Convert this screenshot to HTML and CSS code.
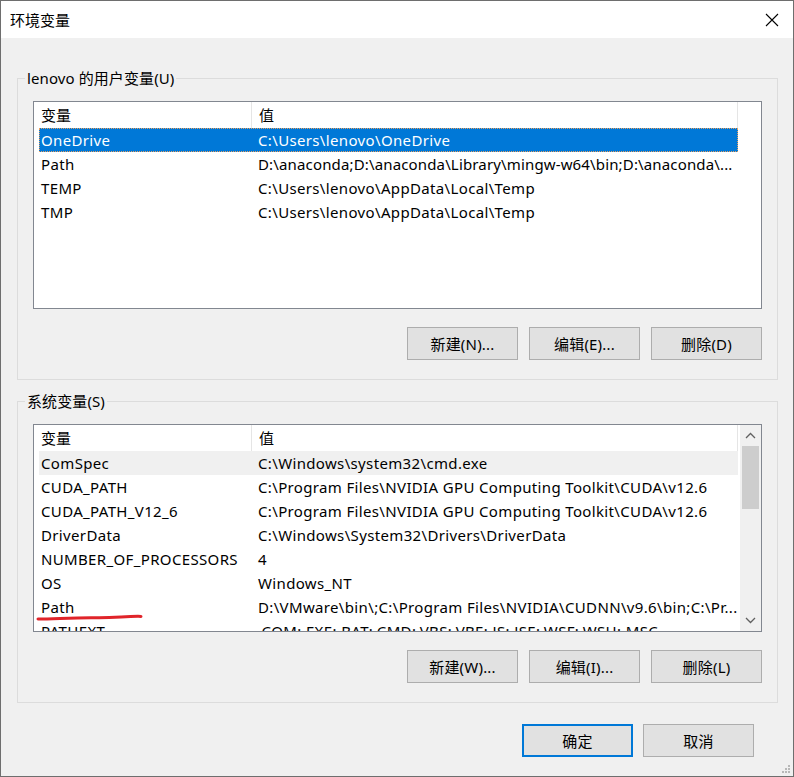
FILE: index.html
```html
<!DOCTYPE html>
<html lang="zh-CN">
<head>
<meta charset="utf-8">
<title>环境变量</title>
<link rel="stylesheet" href="styles.css">
</head>
<body>
<div class="window">
  <div class="titlebar">
    <span class="title">环境变量</span>
    <span class="close">
      <svg width="14" height="14" viewBox="0 0 14 14"><path d="M1 1 L13 13 M13 1 L1 13" stroke="#000" stroke-width="1.1" fill="none"/></svg>
    </span>
  </div>
  <div class="content">
    <div class="group">
      <span class="group-label">lenovo 的用户变量(U)</span>
      <div class="list">
        <div class="list-body">
          <div class="header">
            <div class="hcell h1">变量</div>
            <div class="hcell h2">值</div>
          </div>
          <div class="row selected"><div class="c1">OneDrive</div><div class="c2">C:\Users\lenovo\OneDrive</div></div>
          <div class="row"><div class="c1">Path</div><div class="c2 tight">D:\anaconda;D:\anaconda\Library\mingw-w64\bin;D:\anaconda\...</div></div>
          <div class="row"><div class="c1">TEMP</div><div class="c2">C:\Users\lenovo\AppData\Local\Temp</div></div>
          <div class="row"><div class="c1">TMP</div><div class="c2">C:\Users\lenovo\AppData\Local\Temp</div></div>
        </div>
      </div>
      <div class="btnrow">
        <button class="btn">新建(N)...</button>
        <button class="btn">编辑(E)...</button>
        <button class="btn">删除(D)</button>
      </div>
    </div>

    <div class="group group2">
      <span class="group-label">系统变量(S)</span>
      <div class="list">
        <div class="list-body">
          <div class="header">
            <div class="hcell h1">变量</div>
            <div class="hcell h2">值</div>
          </div>
          <div class="row hover"><div class="c1">ComSpec</div><div class="c2">C:\Windows\system32\cmd.exe</div></div>
          <div class="row"><div class="c1">CUDA_PATH</div><div class="c2">C:\Program Files\NVIDIA GPU Computing Toolkit\CUDA\v12.6</div></div>
          <div class="row"><div class="c1">CUDA_PATH_V12_6</div><div class="c2">C:\Program Files\NVIDIA GPU Computing Toolkit\CUDA\v12.6</div></div>
          <div class="row"><div class="c1">DriverData</div><div class="c2">C:\Windows\System32\Drivers\DriverData</div></div>
          <div class="row"><div class="c1">NUMBER_OF_PROCESSORS</div><div class="c2">4</div></div>
          <div class="row"><div class="c1">OS</div><div class="c2">Windows_NT</div></div>
          <div class="row"><div class="c1">Path</div><div class="c2">D:\VMware\bin\;C:\Program Files\NVIDIA\CUDNN\v9.6\bin;C:\Pr...</div></div>
          <div class="row"><div class="c1">PATHEXT</div><div class="c2">.COM;.EXE;.BAT;.CMD;.VBS;.VBE;.JS;.JSE;.WSF;.WSH;.MSC</div></div>
        </div>
        <div class="scrollbar">
          <div class="sb-arrow">
            <svg width="11" height="7" viewBox="0 0 11 7"><path d="M1 6 L5.5 1.5 L10 6" stroke="#606060" stroke-width="1.3" fill="none"/></svg>
          </div>
          <div class="sb-track"><div class="sb-thumb"></div></div>
          <div class="sb-arrow">
            <svg width="11" height="7" viewBox="0 0 11 7"><path d="M1 1 L5.5 5.5 L10 1" stroke="#606060" stroke-width="1.3" fill="none"/></svg>
          </div>
        </div>
        <svg class="scribble" width="110" height="10" viewBox="0 0 110 10"><path d="M2 7 C 20 6.8, 40 5.5, 60 5.8 S 90 4, 105 4.4" stroke="#e0242a" stroke-width="3" stroke-linecap="round" fill="none"/></svg>
      </div>
      <div class="btnrow">
        <button class="btn">新建(W)...</button>
        <button class="btn">编辑(I)...</button>
        <button class="btn">删除(L)</button>
      </div>
    </div>

    <div class="footer">
      <button class="btn primary">确定</button>
      <button class="btn">取消</button>
    </div>
  </div>
  <svg class="grip" width="9" height="9" viewBox="0 0 9 9">
    <rect x="6" y="0" width="2" height="2" fill="#b8b8b8"/>
    <rect x="3" y="3" width="2" height="2" fill="#b8b8b8"/>
    <rect x="6" y="3" width="2" height="2" fill="#b8b8b8"/>
    <rect x="0" y="6" width="2" height="2" fill="#b8b8b8"/>
    <rect x="3" y="6" width="2" height="2" fill="#b8b8b8"/>
    <rect x="6" y="6" width="2" height="2" fill="#b8b8b8"/>
  </svg>
</div>
</body>
</html>
```

FILE: styles.css
```css
* { box-sizing: border-box; }
html, body { margin: 0; padding: 0; background: #f0f0f0; }
body {
  font-family: "Segoe UI", "Noto Sans", "Noto Sans CJK SC", sans-serif;
  font-size: 15px;
  color: #000;
}
.window {
  position: relative;
  width: 794px;
  height: 777px;
  border: 1px solid #6e6e6e;
  background: #f0f0f0;
  display: flex;
  flex-direction: column;
}
.titlebar {
  height: 37px;
  background: #fff;
  display: flex;
  align-items: center;
  justify-content: space-between;
  padding: 0 14px 0 9px;
  flex: none;
}
.title { line-height: 20px; }
.close { display: flex; align-items: center; }
.content {
  padding: 0 15px 0 16px;
  display: flex;
  flex-direction: column;
}
.group {
  position: relative;
  margin-top: 40px;
  height: 302px;
  border: 1px solid #dcdcdc;
  padding: 22px 15px 0 15px;
}
.group2 { margin-top: 21px; }
.group-label {
  position: absolute;
  top: -11px;
  left: 7px;
  padding: 0 2px;
  background: #f0f0f0;
  line-height: 20px;
  white-space: nowrap;
  letter-spacing: 0.1px;
}
.list {
  position: relative;
  height: 208px;
  border: 1px solid #828790;
  background: #fff;
  display: flex;
  overflow: hidden;
}
.list-body {
  flex: 1;
  min-width: 0;
  overflow: hidden;
}
.header {
  display: flex;
  height: 26px;
  width: 704px;
}
.hcell {
  line-height: 27px;
  padding-left: 7px;
  border-right: 1px solid #e5e5e5;
  white-space: nowrap;
  flex: none;
}
.h1 { width: 218px; }
.h2 { width: 486px; }
.row {
  display: flex;
  height: 24px;
  line-height: 24px;
  margin-left: 5px;
  width: 699px;
  white-space: nowrap;
  letter-spacing: 0.35px;
}
.row .c1 { flex: none; width: 213px; padding-left: 2px; overflow: hidden; }
.row .c2 { flex: 1 1 0; min-width: 0; padding-left: 6px; overflow: visible; }
.row .c2.tight { letter-spacing: 0.15px; }
.row.selected {
  background: #0078d7;
  color: #fff;
  outline: 1px dotted #e8a060;
  outline-offset: -1px;
}
.row.hover { background: #f0f0f0; }
.scrollbar {
  width: 21px;
  flex: none;
  background: #f0f0f0;
  display: flex;
  flex-direction: column;
}
.sb-arrow {
  height: 21px;
  display: flex;
  align-items: center;
  justify-content: center;
  flex: none;
}
.sb-track { flex: 1; padding: 0 2px; }
.sb-thumb { height: 63px; background: #cdcdcd; }
.scribble {
  position: absolute;
  left: 2px;
  top: 187px;
}
.btnrow {
  display: flex;
  justify-content: flex-end;
  gap: 11px;
  margin-top: 18px;
  padding-right: 0;
}
.btn {
  width: 111px;
  height: 33px;
  background: #e1e1e1;
  border: 1px solid #adadad;
  font: inherit;
  letter-spacing: 0.2px;
  color: #000;
  padding: 0;
  margin: 0;
}
.footer {
  display: flex;
  justify-content: flex-end;
  gap: 10px;
  margin-top: 21px;
  padding-right: 24px;
}
.btn.primary { border: 2px solid #0078d7; }
.grip {
  position: absolute;
  right: 2px;
  bottom: 2px;
}
```
